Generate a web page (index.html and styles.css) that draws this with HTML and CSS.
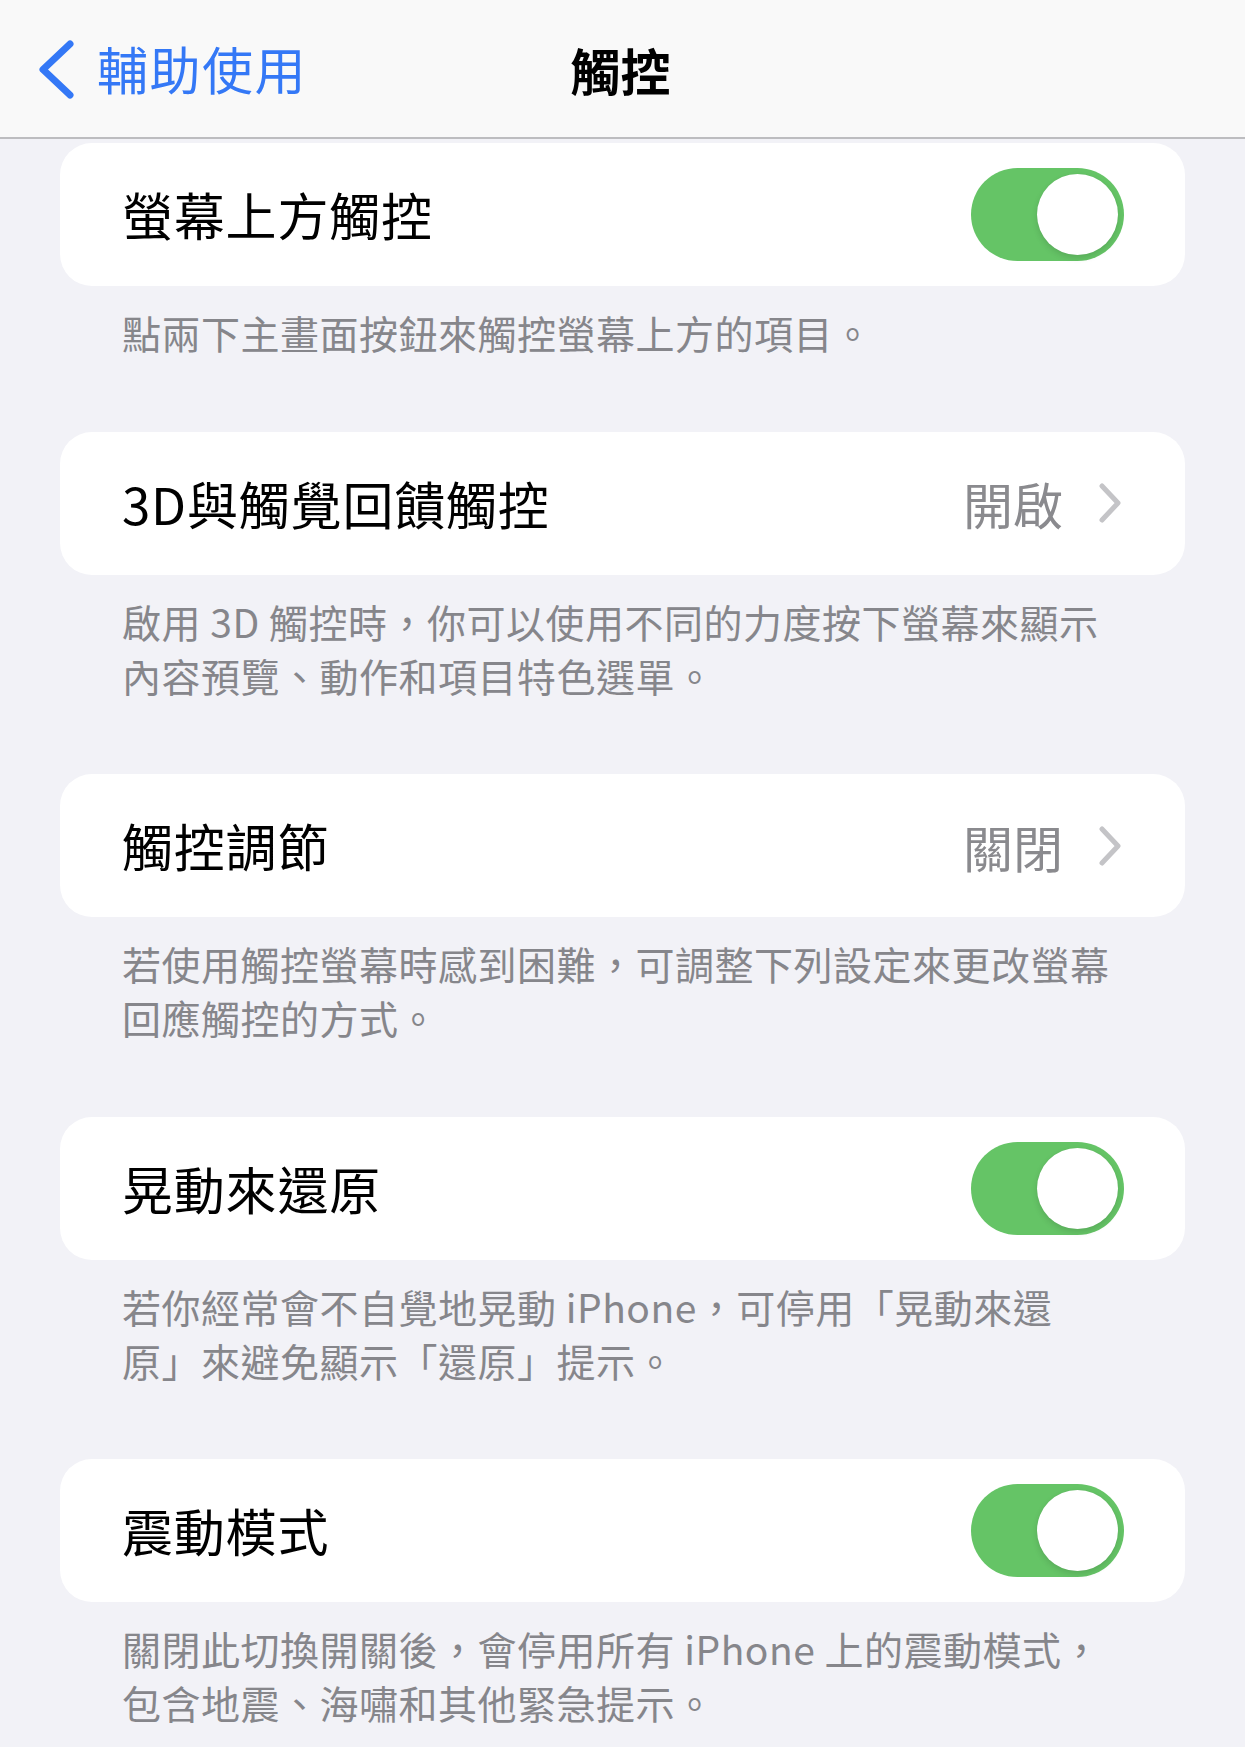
FILE: index.html
```html
<!DOCTYPE html>
<html lang="zh-Hant">
<head>
<meta charset="utf-8">
<title>觸控</title>
<link rel="stylesheet" href="styles.css">
</head>
<body>
<header class="nav">
  <div class="nav-back">
    <svg class="back-chevron" width="40" height="60" viewBox="0 0 40 60">
      <polyline points="33,4 6,29.5 33,55" fill="none" stroke="#3478f6" stroke-width="7" stroke-linecap="round" stroke-linejoin="round"/>
    </svg>
    <span class="back-label">輔助使用</span>
  </div>
  <div class="nav-title">觸控</div>
  <div class="nav-spacer"></div>
</header>
<main class="content">
  <section class="group">
    <div class="card">
      <div class="row">
        <span class="row-label">螢幕上方觸控</span>
        <span class="toggle on"><span class="knob"></span></span>
      </div>
    </div>
    <p class="footer">點兩下主畫面按鈕來觸控螢幕上方的項目。</p>
  </section>
  <section class="group">
    <div class="card">
      <div class="row disclosure">
        <span class="row-label">3D與觸覺回饋觸控</span>
        <span class="row-value">開啟</span>
        <svg class="chevron" width="22" height="40" viewBox="0 0 22 40">
          <polyline points="3,3 19,20 3,37" fill="none" stroke="#c4c4c7" stroke-width="5" stroke-linecap="round" stroke-linejoin="round"/>
        </svg>
      </div>
    </div>
    <p class="footer">啟用 3D 觸控時，你可以使用不同的力度按下螢幕來顯示<br>內容預覽、動作和項目特色選單。</p>
  </section>
  <section class="group">
    <div class="card">
      <div class="row disclosure">
        <span class="row-label">觸控調節</span>
        <span class="row-value">關閉</span>
        <svg class="chevron" width="22" height="40" viewBox="0 0 22 40">
          <polyline points="3,3 19,20 3,37" fill="none" stroke="#c4c4c7" stroke-width="5" stroke-linecap="round" stroke-linejoin="round"/>
        </svg>
      </div>
    </div>
    <p class="footer">若使用觸控螢幕時感到困難，可調整下列設定來更改螢幕<br>回應觸控的方式。</p>
  </section>
  <section class="group">
    <div class="card">
      <div class="row">
        <span class="row-label">晃動來還原</span>
        <span class="toggle on"><span class="knob"></span></span>
      </div>
    </div>
    <p class="footer">若你經常會不自覺地晃動 iPhone，可停用「晃動來還<br>原」來避免顯示「還原」提示。</p>
  </section>
  <section class="group">
    <div class="card">
      <div class="row">
        <span class="row-label">震動模式</span>
        <span class="toggle on"><span class="knob"></span></span>
      </div>
    </div>
    <p class="footer">關閉此切換開關後，會停用所有 iPhone 上的震動模式，<br>包含地震、海嘯和其他緊急提示。</p>
  </section>
</main>
</body>
</html>
```

FILE: styles.css
```css
html, body {
  margin: 0;
  padding: 0;
}

body {
  width: 1245px;
  min-height: 1747px;
  background: #f2f2f7;
  font-family: "Noto Sans CJK TC", "Noto Sans CJK SC", "Noto Sans", sans-serif;
  color: #000;
  overflow: hidden;
}

.nav {
  height: 137px;
  background: #f9f9f9;
  border-bottom: 2px solid #bdbdc0;
  display: grid;
  grid-template-columns: 1fr auto 1fr;
  align-items: center;
}

.nav-back {
  display: flex;
  align-items: center;
  padding-left: 37px;
  gap: 20px;
}

.back-chevron {
  display: block;
  margin-top: 2px;
}

.back-label {
  font-size: 51px;
  color: #3478f6;
  line-height: 1;
  letter-spacing: 1.5px;
}

.nav-title {
  font-size: 50px;
  font-weight: 700;
  line-height: 1;
  margin-left: -4px;
}

.content {
  padding: 4px 60px 0;
}

.card {
  background: #fff;
  border-radius: 32px;
  overflow: hidden;
}

.row {
  height: 143px;
  display: flex;
  align-items: center;
  padding: 0 61px 0 62px;
}

.row.disclosure {
  padding-right: 64px;
}

.row-label {
  flex: 1;
  font-size: 51px;
  line-height: 1;
  letter-spacing: 0.8px;
}

.row-value {
  font-size: 50px;
  line-height: 1;
  color: #8a8a8e;
  margin-right: 36px;
}

.chevron {
  display: block;
}

.toggle {
  width: 153px;
  height: 93px;
  border-radius: 47px;
  background: #e9e9ea;
  position: relative;
  flex: none;
}

.toggle.on {
  background: #65c466;
}

.knob {
  position: absolute;
  top: 6px;
  right: 6px;
  width: 81px;
  height: 81px;
  border-radius: 50%;
  background: #fff;
  box-shadow: 0 3px 6px rgba(0, 0, 0, 0.12), 0 0 1px rgba(0, 0, 0, 0.08);
}

.footer {
  margin: 0;
  padding: 19px 62px 72.5px;
  font-size: 39px;
  line-height: 54px;
  color: #86868b;
  letter-spacing: 0.5px;
  white-space: nowrap;
}
```
